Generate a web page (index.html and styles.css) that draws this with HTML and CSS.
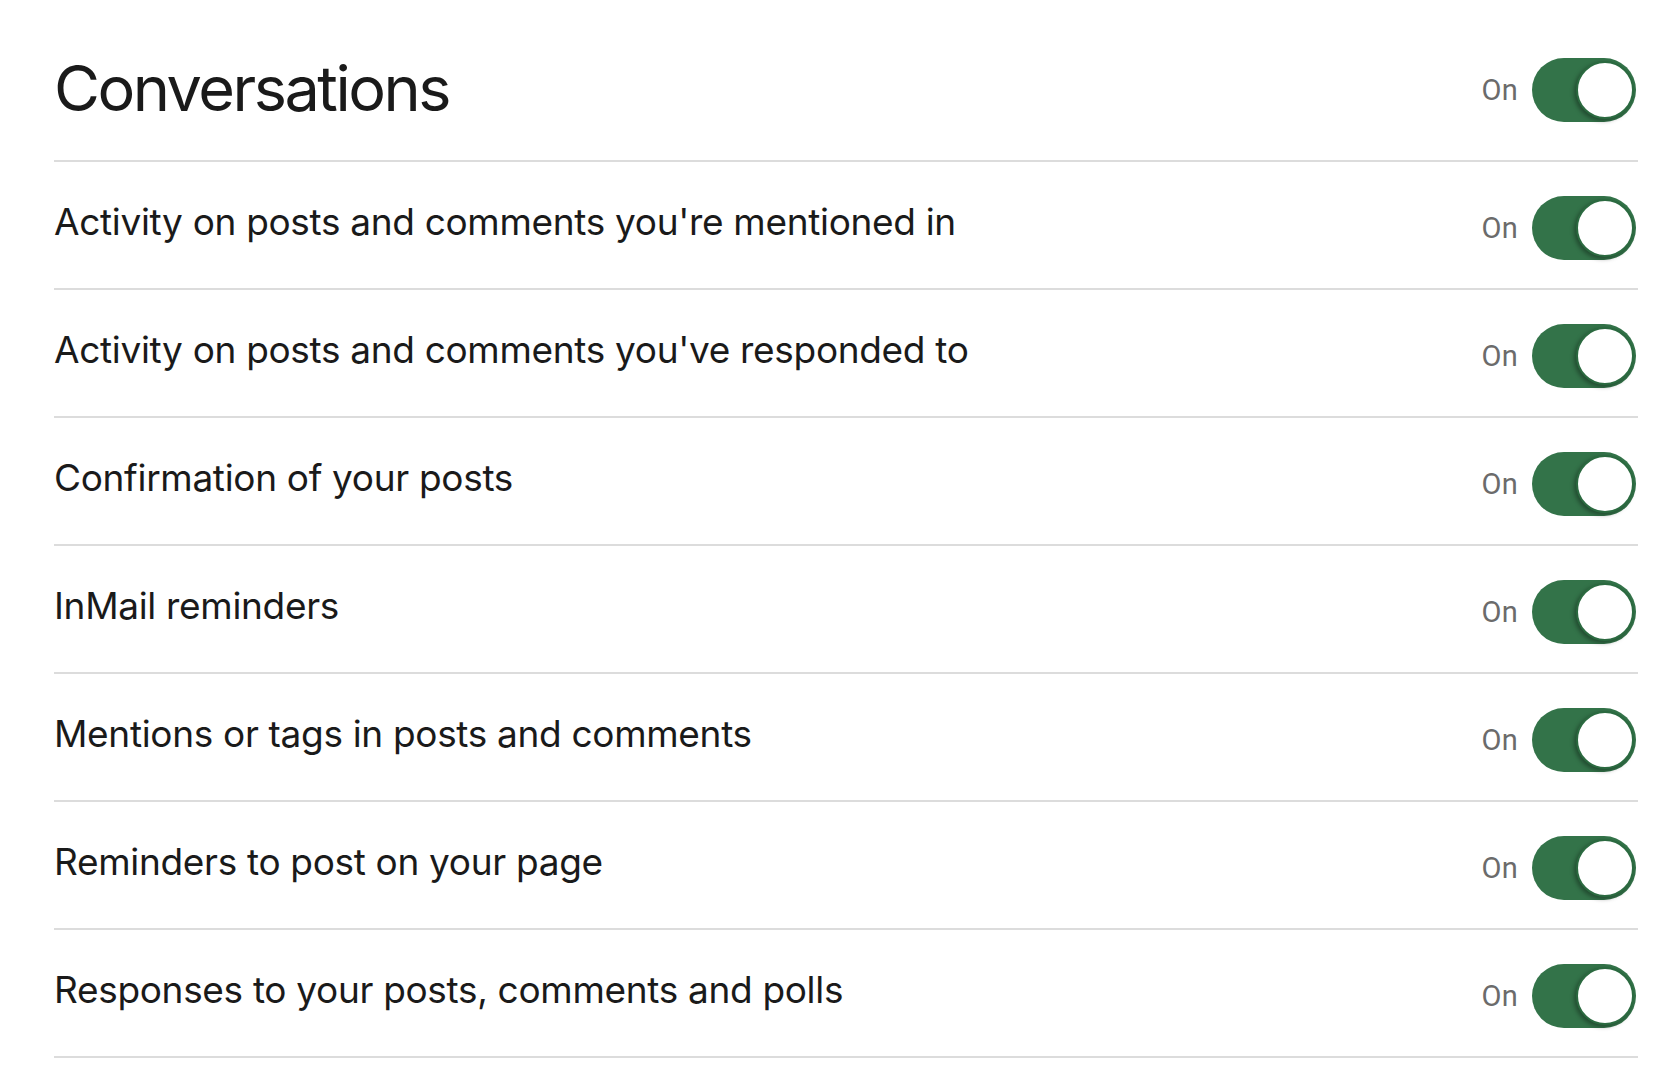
FILE: index.html
```html
<!DOCTYPE html>
<html lang="en">
<head>
<meta charset="utf-8">
<title>Conversations</title>
<link rel="stylesheet" href="styles.css">
</head>
<body>
<main class="panel">
  <header class="head">
    <h1 class="title">Conversations</h1>
    <div class="switch-wrap"><span class="state">On</span><span class="switch"><span class="knob"></span></span></div>
  </header>
  <ul class="list">
    <li class="row"><span class="label">Activity on posts and comments you're mentioned in</span><div class="switch-wrap"><span class="state">On</span><span class="switch"><span class="knob"></span></span></div></li>
    <li class="row"><span class="label">Activity on posts and comments you've responded to</span><div class="switch-wrap"><span class="state">On</span><span class="switch"><span class="knob"></span></span></div></li>
    <li class="row"><span class="label">Confirmation of your posts</span><div class="switch-wrap"><span class="state">On</span><span class="switch"><span class="knob"></span></span></div></li>
    <li class="row"><span class="label">InMail reminders</span><div class="switch-wrap"><span class="state">On</span><span class="switch"><span class="knob"></span></span></div></li>
    <li class="row"><span class="label">Mentions or tags in posts and comments</span><div class="switch-wrap"><span class="state">On</span><span class="switch"><span class="knob"></span></span></div></li>
    <li class="row"><span class="label">Reminders to post on your page</span><div class="switch-wrap"><span class="state">On</span><span class="switch"><span class="knob"></span></span></div></li>
    <li class="row"><span class="label">Responses to your posts, comments and polls</span><div class="switch-wrap"><span class="state">On</span><span class="switch"><span class="knob"></span></span></div></li>
  </ul>
</main>
</body>
</html>
```

FILE: styles.css
```css
html, body {
  margin: 0;
  padding: 0;
  background: #ffffff;
}
body {
  font-family: Inter, "Liberation Sans", sans-serif;
  color: #1a1a1a;
}
.panel {
  margin: 0 36px 0 54px;
}
.head {
  box-sizing: border-box;
  height: 162px;
  padding: 27px 0 7px;
  display: flex;
  align-items: center;
  justify-content: space-between;
  border-bottom: 2px solid #dcdcdc;
}
.title {
  margin: 0;
  font-size: 63px;
  font-weight: 400;
  letter-spacing: -2.5px;
  color: #1a1a1a;
  padding-bottom: 4px;
}
.list {
  list-style: none;
  margin: 0;
  padding: 0;
}
.row {
  box-sizing: border-box;
  height: 128px;
  display: flex;
  align-items: center;
  justify-content: space-between;
  border-bottom: 2px solid #dcdcdc;
  padding-top: 5px;
}
.label {
  font-size: 37px;
  font-weight: 400;
  letter-spacing: -0.32px;
  padding-bottom: 13px;
  color: #1a1a1a;
}
.switch-wrap {
  display: flex;
  align-items: center;
  gap: 14px;
  margin-right: 2px;
}
.state {
  font-family: Roboto, "Liberation Sans", sans-serif;
  font-size: 29px;
  color: #6b6b6b;
  letter-spacing: 0.3px;
}
.switch {
  box-sizing: border-box;
  width: 104px;
  height: 64px;
  border-radius: 32px;
  background: #337349;
  display: flex;
  align-items: center;
  justify-content: flex-end;
  padding-right: 2px;
}
.knob {
  box-sizing: border-box;
  width: 58px;
  height: 58px;
  border-radius: 50%;
  background: #ffffff;
  border: 2px solid #2b6a40;
  box-shadow: -2px 2px 4px rgba(0, 0, 0, 0.35);
}
```
